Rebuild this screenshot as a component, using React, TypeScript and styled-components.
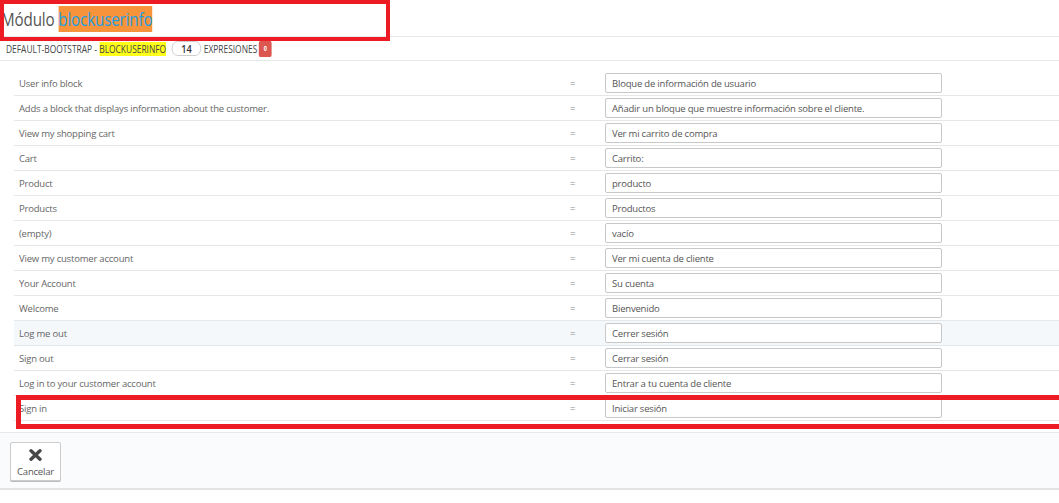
import React from 'react';
import styled, { createGlobalStyle } from 'styled-components';

const GlobalStyle = createGlobalStyle`
  html, body {
    margin: 0;
    padding: 0;
    background: #fff;
  }
  body {
    font-family: 'Open Sans', 'Liberation Sans', sans-serif;
    color: #555;
  }
`;

const rows = [
  { source: 'User info block', value: 'Bloque de información de usuario' },
  {
    source: 'Adds a block that displays information about the customer.',
    value: 'Añadir un bloque que muestre información sobre el cliente.',
  },
  { source: 'View my shopping cart', value: 'Ver mi carrito de compra' },
  { source: 'Cart', value: 'Carrito:' },
  { source: 'Product', value: 'producto' },
  { source: 'Products', value: 'Productos' },
  { source: '(empty)', value: 'vacío' },
  { source: 'View my customer account', value: 'Ver mi cuenta de cliente' },
  { source: 'Your Account', value: 'Su cuenta' },
  { source: 'Welcome', value: 'Bienvenido' },
  { source: 'Log me out', value: 'Cerrer sesión', hover: true },
  { source: 'Sign out', value: 'Cerrar sesión' },
  { source: 'Log in to your customer account', value: 'Entrar a tu cuenta de cliente' },
  { source: 'Sign in', value: 'Iniciar sesión' },
];

const Page = styled.div`
  position: relative;
  width: 1059px;
  height: 503px;
  overflow: hidden;
`;

const TitleBar = styled.div`
  height: 36px;
  border-bottom: 1px solid #e8e8e8;
  display: flex;
  align-items: center;
  padding-left: 1px;
`;

// the original heading font is a condensed face; squeeze the one we have
const Title = styled.h2`
  margin: 2px 0 0;
  font-family: 'Open Sans', 'Liberation Sans', sans-serif;
  font-weight: 400;
  font-size: 19px;
  letter-spacing: -0.2px;
  color: #555;
  transform: scaleX(0.8);
  transform-origin: left center;
  white-space: nowrap;
`;

const Mark = styled.span<{ $bg: string; $fg?: string }>`
  background: ${({ $bg }) => $bg};
  color: ${({ $fg }) => $fg || 'inherit'};
`;

const SubBar = styled.div`
  height: 23px;
  border-bottom: 1px solid #e8e8e8;
  display: flex;
  align-items: center;
  padding-left: 6px;
`;

const SubTitle = styled.div`
  display: flex;
  align-items: center;
  white-space: pre;
  font-family: 'Open Sans', 'Liberation Sans', sans-serif;
  font-size: 10.5px;
  text-transform: uppercase;
  color: #444;
  transform: scaleX(0.8);
  transform-origin: left center;
`;

const CountPill = styled.span`
  display: inline-flex;
  align-items: center;
  justify-content: center;
  height: 13px;
  min-width: 35px;
  margin: 0 3px 0 7px;
  border: 1px solid #c8c8c8;
  border-radius: 8px;
  font-weight: 600;
  font-size: 11.5px;
  color: #333;
`;

const ErrorBadge = styled.span`
  display: inline-flex;
  align-items: center;
  justify-content: center;
  width: 16px;
  height: 16px;
  margin-left: 2px;
  border-radius: 2px;
  background: #dc5750;
  color: #fff;
  font-size: 7px;
  font-weight: 700;
`;

const Table = styled.div`
  margin: 10px 0 0 14px;
`;

const Row = styled.div<{ $hover?: boolean }>`
  display: grid;
  grid-template-columns: 552px 39px 337px 1fr;
  align-items: center;
  height: 24px;
  border-bottom: 1px solid #e5e8ea;
  background: ${({ $hover }) => ($hover ? '#f4f8fb' : '#fff')};
  font-size: 9.5px;
  letter-spacing: -0.2px;
  color: #666;
`;

const Source = styled.div`
  padding-left: 5px;
`;

const Equals = styled.div`
  padding-left: 4px;
  color: #888;
`;

const Field = styled.input`
  box-sizing: border-box;
  width: 337px;
  height: 20px;
  padding: 0 6px;
  border: 1px solid #c8c8c8;
  border-radius: 2px;
  font-family: 'Open Sans', 'Liberation Sans', sans-serif;
  font-size: 9.5px;
  letter-spacing: -0.2px;
  color: #555;
  background: #fff;
  outline: none;
`;

const Footer = styled.div`
  margin-top: 11px;
  height: 58px;
  border-top: 1px solid #e8e8e8;
  border-bottom: 2px solid #e3e3e3;
  background: #fafbfc;
  padding: 9px 0 0 10px;
  box-sizing: border-box;
`;

const CancelButton = styled.button`
  width: 51px;
  height: 39px;
  padding: 3px 0 0;
  display: flex;
  flex-direction: column;
  align-items: center;
  justify-content: center;
  gap: 4px;
  background: #fff;
  border: 1px solid #ccc;
  border-radius: 2px;
  box-shadow: 0 1px 0 #bbb;
  font-family: 'Open Sans', 'Liberation Sans', sans-serif;
  font-size: 9.5px;
  letter-spacing: -0.2px;
  color: #555;
`;

const Annotation = styled.div<{ $top: number; $left: number; $width: number; $height: number; $border: number }>`
  position: absolute;
  top: ${({ $top }) => $top}px;
  left: ${({ $left }) => $left}px;
  width: ${({ $width }) => $width}px;
  height: ${({ $height }) => $height}px;
  border: ${({ $border }) => $border}px solid #ed1c24;
  box-sizing: border-box;
  pointer-events: none;
`;

const CloseIcon = () => (
  <svg width="13" height="12" viewBox="0 0 13 12">
    <path d="M2 1.8 L11 10.2 M11 1.8 L2 10.2" stroke="#474747" strokeWidth="3.4" strokeLinecap="round" />
  </svg>
);

export default function App() {
  return (
    <Page>
      <GlobalStyle />
      <TitleBar>
        <Title>
          Módulo <Mark $bg="#f7933b" $fg="#1f9fe0">blockuserinfo</Mark>
        </Title>
      </TitleBar>
      <SubBar>
        <SubTitle>
          {'default-bootstrap - '}
          <Mark $bg="#ffff1a">blockuserinfo</Mark>
          <CountPill>14</CountPill>
          expresiones
          <ErrorBadge>0</ErrorBadge>
        </SubTitle>
      </SubBar>
      <Table>
        {rows.map((r) => (
          <Row key={r.source} $hover={r.hover}>
            <Source>{r.source}</Source>
            <Equals>=</Equals>
            <Field defaultValue={r.value} />
            <div />
          </Row>
        ))}
      </Table>
      <Footer>
        <CancelButton>
          <CloseIcon />
          Cancelar
        </CancelButton>
      </Footer>
      <Annotation $top={0} $left={0} $width={390} $height={41} $border={4} />
      <Annotation $top={395} $left={16} $width={1060} $height={34} $border={5} />
    </Page>
  );
}
